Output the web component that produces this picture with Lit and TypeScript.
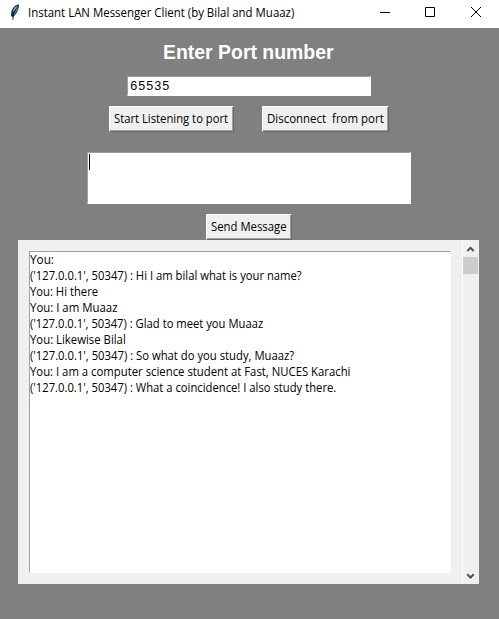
import { LitElement, html, css } from "lit";
import { customElement, property } from "lit/decorators.js";

/** A single line of text condensed or widened so it spans a given width. */
@customElement("fit-text")
class FitText extends LitElement {
  @property() text = "";
  @property({ type: Number }) span = 0;

  static styles = css`
    :host { display: block; white-space: pre; }
    span { display: inline-block; transform-origin: 0 0; }
  `;

  render() {
    return html`<span>${this.text}</span>`;
  }

  updated() {
    const el = this.renderRoot.querySelector("span") as HTMLElement;
    el.style.transform = `scaleX(${(this.span / el.offsetWidth).toFixed(4)})`;
  }
}

const MESSAGES: Array<[string, number]> = [
  ["You:", 23.5],
  ["('127.0.0.1', 50347) : Hi I am bilal what is your name?", 272],
  ["You: Hi there", 68.5],
  ["You: I am Muaaz", 87.5],
  ["('127.0.0.1', 50347) : Glad to meet you Muaaz", 233],
  ["You: Likewise Bilal", 95.5],
  ["('127.0.0.1', 50347) : So what do you study, Muaaz?", 264],
  ["You: I am a computer science student at Fast, NUCES Karachi", 320],
  ["('127.0.0.1', 50347) : What a coincidence! I also study there.", 306.5],
];

@customElement("app-root")
class AppRoot extends LitElement {
  static styles = css`
    :host {
      display: flex;
      flex-direction: column;
      width: 499px;
      height: 619px;
      overflow: hidden;
      background: #808080;
      color: #000;
      font: 12px/16px "Open Sans", "Noto Sans", sans-serif;
    }
    * { box-sizing: border-box; }
    .titlebar {
      display: flex;
      align-items: center;
      flex: none;
      height: 28px;
      padding-left: 8px;
      background: #fff;
    }
    .feather { width: 14px; height: 18px; margin: -4px 6px 0 0; }
    .titlebar fit-text { flex: 1; margin-top: -3px; }
    .controls { display: flex; margin-top: -4px; }
    .controls svg { display: block; width: 46px; height: 24px; }
    h1 {
      margin: 12px 0 0 163px;
      height: 24px;
      font: bold 20px/24px "Liberation Sans", Arial, sans-serif;
      color: #fff;
    }
    .port {
      width: 244px;
      height: 20px;
      margin: 12px 0 0 127px;
      padding: 2px 0 0 2px;
      border: 1px solid #fff;
      border-top-color: #a0a0a0;
      border-left-color: #a0a0a0;
      background: #fff;
      font: 12.5px/16px "Liberation Mono", "Courier New", monospace;
      letter-spacing: 0.5px;
    }
    .buttons { display: flex; gap: 28px; margin: 10px 0 0 109px; }
    button {
      display: flex;
      align-items: flex-start;
      height: 26px;
      margin: 0;
      padding: 4px 0 0 4px;
      border: 1px solid #fff;
      border-right-color: #696969;
      border-bottom-color: #696969;
      background: #f0f0f0;
      box-shadow: inset -1px -1px #a0a0a0;
      font: inherit;
      color: inherit;
      text-align: left;
    }
    button fit-text { height: 16px; }
    .start { width: 125px; }
    .stop { width: 127px; }
    .compose {
      width: 324px;
      height: 52px;
      margin: 20px 0 0 87px;
      padding: 1px;
      border: 1px solid #fff;
      border-top-color: #a0a0a0;
      border-left-color: #a0a0a0;
      background: #fff;
    }
    .caret { width: 1px; height: 16px; background: #000; }
    .send { width: 86px; margin: 10px 0 0 206px; }
    .panel {
      display: flex;
      width: 461px;
      height: 344px;
      margin-left: 18px;
      background: #f0f0f0;
    }
    .log {
      width: 422px;
      height: 322px;
      margin: 11px 11px 0 11px;
      border: 1px solid #fff;
      border-top-color: #a0a0a0;
      border-left-color: #a0a0a0;
      background: #fff;
    }
    .scroll {
      display: flex;
      flex-direction: column;
      width: 17px;
      border-left: 1px solid #fff;
    }
    .scroll svg { display: block; width: 16px; height: 17px; }
    .thumb { width: 15px; height: 17px; background: #cdcdcd; }
    .track { flex: 1; }
  `;

  render() {
    return html`
      <div class="titlebar">
        <svg class="feather" viewBox="0 0 14 18">
          <path d="M10.6 1.2C7 2 4 5.2 3.2 9.2L3 13l1.4 1C8 12.4 10.4 7.6 11 3z" fill="#172c42" />
          <path d="M9.8 2.3C7.2 3.6 5.3 6 4.7 9.5L7.4 6z" fill="#9cc4e4" />
          <path d="M10.2 3.2C9.6 7 7.8 10.6 5.2 12.4L6.8 8.6z" fill="#5e90bf" />
          <path d="M7.4 7.4L5.3 11l-.4 5.6" fill="none" stroke="#101820" stroke-width="1" />
        </svg>
        <fit-text text="Instant LAN Messenger Client (by Bilal and Muaaz)" span="266"></fit-text>
        <div class="controls">
          <svg viewBox="0 0 46 24"><path d="M19 12.5h10" stroke="#000" /></svg>
          <svg viewBox="0 0 46 24"><path d="M18.5 7.5h9v9h-9z" fill="none" stroke="#000" /></svg>
          <svg viewBox="0 0 46 24"><path d="M18 7l10 10M28 7L18 17" stroke="#000" /></svg>
        </div>
      </div>
      <h1><fit-text text="Enter Port number" span="171"></fit-text></h1>
      <div class="port">65535</div>
      <div class="buttons">
        <button class="start"><fit-text text="Start Listening to port" span="114.5"></fit-text></button>
        <button class="stop"><fit-text text="Disconnect  from port" span="116.5"></fit-text></button>
      </div>
      <div class="compose"><div class="caret"></div></div>
      <button class="send"><fit-text text="Send Message" span="75.5"></fit-text></button>
      <div class="panel">
        <div class="log">
          ${MESSAGES.map(([text, span]) => html`<fit-text .text=${text} .span=${span}></fit-text>`)}
        </div>
        <div class="scroll">
          <svg viewBox="0 0 16 17"><path d="M4.3 11L7.5 7.8L10.7 11" fill="none" stroke="#505050" stroke-width="2" /></svg>
          <div class="thumb"></div>
          <div class="track"></div>
          <svg viewBox="0 0 16 17"><path d="M4.3 7.3L7.5 10.5L10.7 7.3" fill="none" stroke="#505050" stroke-width="2" /></svg>
        </div>
      </div>
    `;
  }
}
